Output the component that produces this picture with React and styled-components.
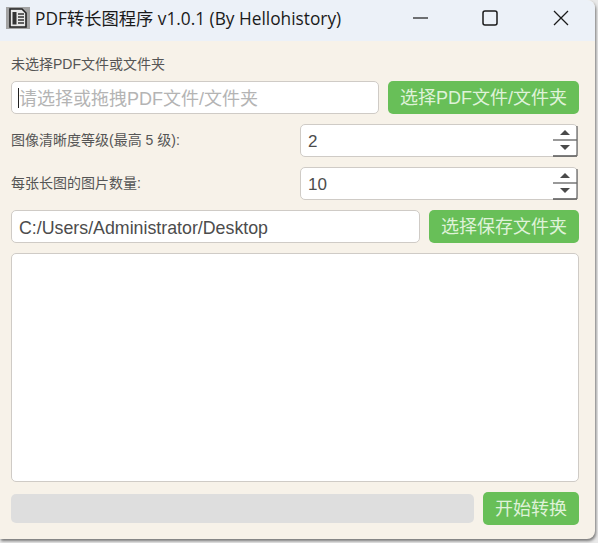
import styled, { createGlobalStyle } from "styled-components";

const Global = createGlobalStyle`
    html, body {
        margin: 0;
        padding: 0;
        background: #e9e9e9;
    }
    * {
        box-sizing: border-box;
    }
`

const Desktop = styled.div`
    width: 598px;
    height: 543px;
    overflow: hidden;
    background: #e9e9e9;
`

const Window = styled.div`
    width: 595px;
    height: 539px;
    display: flex;
    flex-direction: column;
    background: #f7f2e9;
    border-radius: 0 8px 8px 0;
    box-shadow: 1px 2px 3px #777;
    overflow: hidden;
    font-family: "Liberation Sans", "Noto Sans CJK SC", sans-serif;
`

const TitleBar = styled.div`
    height: 41px;
    flex: none;
    display: flex;
    align-items: center;
    padding: 0 0 6px 6px;
    background: #ecf1f8;
`

const AppIcon = styled.svg`
    width: 24px;
    height: 22px;
    flex: none;
    margin-right: 5px;
`

const Title = styled.span`
    flex: 1;
    font-family: "Open Sans", "Noto Sans CJK SC", sans-serif;
    font-size: 17.3px;
    color: #1a1a1a;
    white-space: nowrap;
`

const WinButton = styled.svg`
    width: 16px;
    height: 16px;
    flex: none;
    margin-right: ${(p) => p.$gap}px;
`

const Body = styled.div`
    flex: 1;
    display: flex;
    flex-direction: column;
    padding: 13px 16px 0 11px;
`

const Caption = styled.div`
    height: 21px;
    line-height: 21px;
    font-size: 14px;
    color: #555;
    white-space: nowrap;
    margin-bottom: 6px;
`

const Row = styled.div`
    display: flex;
    align-items: center;
    justify-content: space-between;
    gap: ${(p) => p.$gap}px;
    margin-bottom: 10px;
`

const Field = styled.div`
    position: relative;
    flex: 1;
    height: 33px;
    line-height: 34px;
    padding-left: 7px;
    background: #fff;
    border: 1px solid #cfcbc6;
    border-radius: 5px;
    font-size: ${(p) => p.$size}px;
    color: ${(p) => p.$muted ? "#b4b4b4" : "#4c4c4c"};
    white-space: nowrap;
    overflow: hidden;
`

const Caret = styled.span`
    position: absolute;
    left: 6px;
    top: 6px;
    width: 1px;
    height: 20px;
    background: #222;
`

const GreenButton = styled.button`
    flex: none;
    width: ${(p) => p.$width}px;
    height: 33px;
    padding: 0 0 3px;
    border: 0;
    border-radius: 5px;
    background: #68bf58;
    color: #dff2d9;
    font-family: inherit;
    font-size: 18px;
    white-space: nowrap;
`

const SpinLabel = styled.span`
    font-size: 14px;
    line-height: 20px;
    padding-bottom: 2px;
    color: #555;
    white-space: nowrap;
`

const Spin = styled.div`
    position: relative;
    width: 278px;
    height: 33px;
    margin-right: 1px;
    line-height: 33px;
    padding-left: 7px;
    background: #fff;
    border: 1px solid #cfcbc6;
    border-radius: 5px;
    font-size: 17px;
    color: #4c4c4c;
`

const Stepper = styled.svg`
    position: absolute;
    right: -1px;
    top: -1px;
    width: 26px;
    height: 33px;
`

const LogBox = styled.div`
    height: 229px;
    background: #fff;
    border: 1px solid #cfcbc6;
    border-radius: 5px;
    margin-bottom: 10px;
`

const Footer = styled.div`
    display: flex;
    align-items: center;
    justify-content: space-between;
`

const Progress = styled.div`
    width: 463px;
    height: 29px;
    background: #dedede;
    border-radius: 5px;
`

const StepperIcon = () => (
    <Stepper viewBox="0 0 26 33">
        <path d="M13 6l5 5H8z" fill="#4a4a4a" />
        <path d="M1 16h24" stroke="#777" strokeWidth="1.5" />
        <path d="M8 21h10l-5 5z" fill="#4a4a4a" />
        <path d="M1 32h24" stroke="#555" strokeWidth="1.5" />
        <path d="M25 2v30" stroke="#666" strokeWidth="1.2" />
    </Stepper>
)

export default function App() {
    return (
        <Desktop>
            <Global />
            <Window>
                <TitleBar>
                    <AppIcon viewBox="0 0 24 22">
                        <rect width="24" height="22" fill="#a3a3a3" />
                        <path d="M4 2h12l4 4v14H4z" fill="#e8e8e8" stroke="#222" strokeWidth="1.6" />
                        <rect x="6.5" y="5" width="4" height="12.5" fill="#333" />
                        <path d="M12 7h6M12 10h6M12 13h6M12 16h6" stroke="#333" strokeWidth="1.3" />
                    </AppIcon>
                    <Title>PDF转长图程序 v1.0.1 (By Hellohistory)</Title>
                    <WinButton $gap={53} viewBox="0 0 16 16">
                        <path d="M0 8h15" stroke="#1a1a1a" strokeWidth="1.2" />
                    </WinButton>
                    <WinButton $gap={55} viewBox="0 0 16 16">
                        <rect x="1" y="1" width="14" height="14" rx="2" fill="none" stroke="#1a1a1a" strokeWidth="1.5" />
                    </WinButton>
                    <WinButton $gap={26} viewBox="0 0 16 16">
                        <path d="M1 1l14 14M15 1L1 15" stroke="#1a1a1a" strokeWidth="1.3" />
                    </WinButton>
                </TitleBar>
                <Body>
                    <Caption>未选择PDF文件或文件夹</Caption>
                    <Row $gap={9}>
                        <Field $muted $size={18}>
                            <Caret />
                            请选择或拖拽PDF文件/文件夹
                        </Field>
                        <GreenButton $width={191}>选择PDF文件/文件夹</GreenButton>
                    </Row>
                    <Row>
                        <SpinLabel>图像清晰度等级(最高 5 级):</SpinLabel>
                        <Spin>2<StepperIcon /></Spin>
                    </Row>
                    <Row>
                        <SpinLabel>每张长图的图片数量:</SpinLabel>
                        <Spin>10<StepperIcon /></Spin>
                    </Row>
                    <Row $gap={9}>
                        <Field $size={17.8}>C:/Users/Administrator/Desktop</Field>
                        <GreenButton $width={150}>选择保存文件夹</GreenButton>
                    </Row>
                    <LogBox />
                    <Footer>
                        <Progress />
                        <GreenButton $width={96}>开始转换</GreenButton>
                    </Footer>
                </Body>
            </Window>
        </Desktop>
    )
}
